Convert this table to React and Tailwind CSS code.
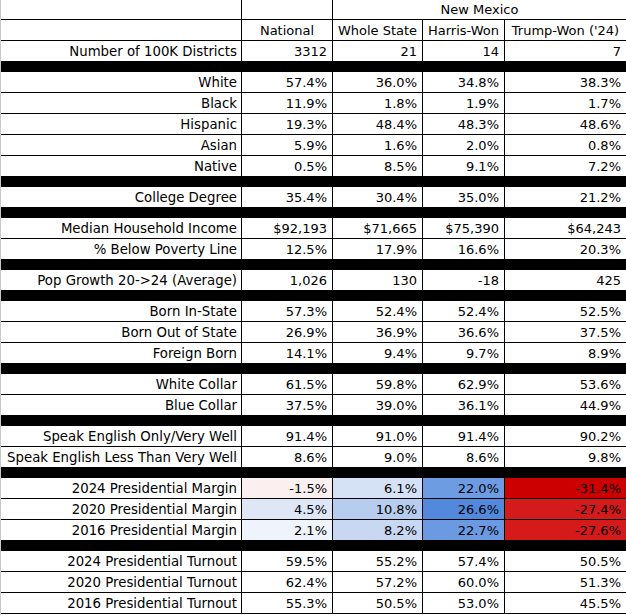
const sections = [
  [["Number of 100K Districts", "3312", "21", "14", "7"]],
  [
    ["White", "57.4%", "36.0%", "34.8%", "38.3%"],
    ["Black", "11.9%", "1.8%", "1.9%", "1.7%"],
    ["Hispanic", "19.3%", "48.4%", "48.3%", "48.6%"],
    ["Asian", "5.9%", "1.6%", "2.0%", "0.8%"],
    ["Native", "0.5%", "8.5%", "9.1%", "7.2%"],
  ],
  [["College Degree", "35.4%", "30.4%", "35.0%", "21.2%"]],
  [
    ["Median Household Income", "$92,193", "$71,665", "$75,390", "$64,243"],
    ["% Below Poverty Line", "12.5%", "17.9%", "16.6%", "20.3%"],
  ],
  [["Pop Growth 20->24 (Average)", "1,026", "130", "-18", "425"]],
  [
    ["Born In-State", "57.3%", "52.4%", "52.4%", "52.5%"],
    ["Born Out of State", "26.9%", "36.9%", "36.6%", "37.5%"],
    ["Foreign Born", "14.1%", "9.4%", "9.7%", "8.9%"],
  ],
  [
    ["White Collar", "61.5%", "59.8%", "62.9%", "53.6%"],
    ["Blue Collar", "37.5%", "39.0%", "36.1%", "44.9%"],
  ],
  [
    ["Speak English Only/Very Well", "91.4%", "91.0%", "91.4%", "90.2%"],
    ["Speak English Less Than Very Well", "8.6%", "9.0%", "8.6%", "9.8%"],
  ],
  [
    ["2024 Presidential Margin", "-1.5%", "6.1%", "22.0%", "-31.4%"],
    ["2020 Presidential Margin", "4.5%", "10.8%", "26.6%", "-27.4%"],
    ["2016 Presidential Margin", "2.1%", "8.2%", "22.7%", "-27.6%"],
  ],
  [
    ["2024 Presidential Turnout", "59.5%", "55.2%", "57.4%", "50.5%"],
    ["2020 Presidential Turnout", "62.4%", "57.2%", "60.0%", "51.3%"],
    ["2016 Presidential Turnout", "55.3%", "50.5%", "53.0%", "45.5%"],
  ],
];

// shading for the margin rows, keyed by label
const shades = {
  "2024 Presidential Margin": ["bg-[#fbefef]", "bg-[#d5e1f5]", "bg-[#6e9ce3]", "bg-[#cc0000]"],
  "2020 Presidential Margin": ["bg-[#dfe7f7]", "bg-[#b7cdf0]", "bg-[#5289dc]", "bg-[#d41b1b]"],
  "2016 Presidential Margin": ["bg-[#eff4fc]", "bg-[#c8d8f3]", "bg-[#6b99e2]", "bg-[#d41a1a]"],
};

const widths = ["w-[91px] border-r", "w-[90px] border-r", "w-[82px] border-r", "flex-1"];

function Row({ cells }) {
  const [label, ...values] = cells;
  const bg = shades[label] || [];
  return (
    <div className="flex h-[21px] border-b border-black">
      <div className="w-[241px] border-r border-black flex items-center justify-end pr-[4px] pt-[1px] text-[13.3px] whitespace-nowrap">
        {label}
      </div>
      {values.map((v, i) => (
        <div
          key={i}
          className={`${widths[i]} ${bg[i] || ""} border-black flex items-center justify-end pr-[5px] pt-[1px]`}
        >
          {v}
        </div>
      ))}
    </div>
  );
}

export default function App() {
  return (
    <div
      className="w-[626px] h-[615px] bg-white text-black text-[13px] border-l border-[#c8c8c8] overflow-hidden"
      style={{ fontFamily: '"DejaVu Sans", Verdana, sans-serif' }}
    >
      {/* Header */}
      <div className="flex h-[20px] border-b border-black">
        <div className="w-[241px] border-r border-black" />
        <div className="w-[91px] border-r border-black" />
        <div className="flex-1 flex items-center justify-center">New Mexico</div>
      </div>
      <div className="flex h-[21px] border-b border-black">
        <div className="w-[241px] border-r border-black" />
        <div className="w-[91px] border-r border-black flex items-center justify-center pt-[1px]">National</div>
        <div className="w-[90px] border-r border-black flex items-center justify-center pt-[1px]">Whole State</div>
        <div className="w-[82px] border-r border-black flex items-center justify-center pt-[1px]">Harris-Won</div>
        <div className="flex-1 flex items-center justify-center pt-[1px]">Trump-Won ('24)</div>
      </div>

      {sections.map((rows, s) => (
        <div key={s}>
          {s > 0 && <div className="h-[10px] bg-black" />}
          {rows.map((r) => (
            <Row key={r[0]} cells={r} />
          ))}
        </div>
      ))}
    </div>
  );
}
